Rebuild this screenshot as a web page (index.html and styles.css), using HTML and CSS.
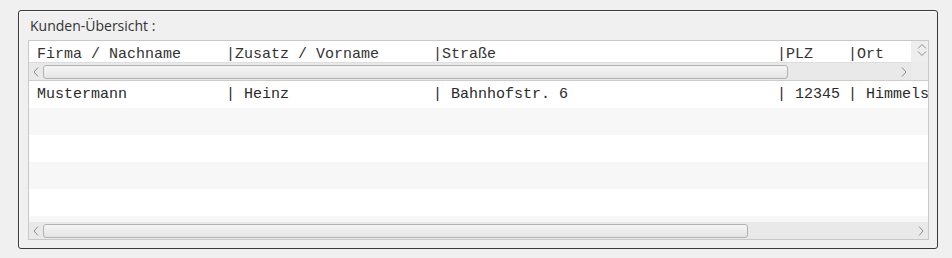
FILE: index.html
```html
<!DOCTYPE html>
<html lang="de">
<head>
  <meta charset="UTF-8" />
  <title>Kunden-Übersicht</title>
  <link rel="stylesheet" href="styles.css">
</head>
<body>
  <div class="groupbox">
    <div class="group-title">Kunden-Übersicht :</div>

    <div class="listview">
      <div class="header-area">
        <div class="header-line">
          <span>Firma / Nachname</span>
          <span>|Zusatz / Vorname</span>
          <span>|Straße</span>
          <span>|PLZ</span>
          <span>|Ort</span>
        </div>
        <div class="vscroll">
          <svg width="10" height="6" viewBox="0 0 10 6"><polyline points="1,5.5 5,1.5 9,5.5" /></svg>
          <svg width="10" height="6" viewBox="0 0 10 6"><polyline points="1,0.5 5,4.5 9,0.5" /></svg>
        </div>
      </div>

      <div class="hscroll-row">
        <div class="hscroll">
          <div class="arrow"><svg width="6" height="10" viewBox="0 0 6 10"><polyline points="5,0.5 1,5 5,9.5" /></svg></div>
          <div class="track"><div class="thumb header-thumb"></div></div>
          <div class="arrow"><svg width="6" height="10" viewBox="0 0 6 10"><polyline points="1,0.5 5,5 1,9.5" /></svg></div>
        </div>
        <div class="corner"></div>
      </div>

      <div class="rows">
        <div class="row">
          <span>Mustermann</span>
          <span>| Heinz</span>
          <span>| Bahnhofstr. 6</span>
          <span>| 12345</span>
          <span>| Himmels</span>
        </div>
        <div class="row"></div>
        <div class="row"></div>
        <div class="row"></div>
        <div class="row"></div>
        <div class="row"></div>
      </div>

      <div class="hscroll bottom">
        <div class="arrow"><svg width="6" height="10" viewBox="0 0 6 10"><polyline points="5,0.5 1,5 5,9.5" /></svg></div>
        <div class="track"><div class="thumb body-thumb"></div></div>
        <div class="arrow"><svg width="6" height="10" viewBox="0 0 6 10"><polyline points="1,0.5 5,5 1,9.5" /></svg></div>
      </div>
    </div>
  </div>
</body>
</html>
```

FILE: styles.css
```css
* {
  margin: 0;
  padding: 0;
  box-sizing: border-box;
}

body {
  background-color: #f0f0f0;
  padding: 10px 0 0 18px;
  font-family: "Open Sans", Arial, sans-serif;
  color: #222;
}

.groupbox {
  width: 920px;
  height: 239px;
  border: 1px solid #3a3a3a;
  border-radius: 3px;
  box-shadow: inset 1px 1px 0 #fafafa;
  padding: 0 0 0 9px;
}

.group-title {
  height: 29px;
  padding: 6px 0 0 2px;
  font-size: 14px;
  line-height: 18px;
  color: #333;
}

.listview {
  width: 901px;
  height: 200px;
  border: 1px solid #c8c8c8;
  background: #fff;
  font-family: "Liberation Mono", "Courier New", monospace;
  font-size: 15px;
  color: #2a2a2a;
}

/* column header line with its own little scrollbars */
.header-area {
  display: flex;
  height: 21px;
}

.header-line,
.row {
  display: grid;
  grid-template-columns: 189px 207px 344px 71px minmax(0, 1fr);
  padding-left: 8px;
  white-space: pre;
}

.header-line {
  flex: 1;
  height: 21px;
  padding-top: 3px;
  line-height: 21px;
  overflow: hidden;
  color: #333;
}

.header-line span,
.row span {
  overflow: hidden;
}

.vscroll {
  width: 17px;
  background: #eeeeee;
  display: flex;
  flex-direction: column;
  align-items: center;
  padding: 2px 0 0 4px;
  gap: 2px;
}

.vscroll svg,
.arrow svg {
  fill: none;
  stroke: #8c8c8c;
  stroke-width: 1;
}

.hscroll-row {
  display: flex;
  height: 19px;
  border-bottom: 1px solid #cdcdcd;
  background: #e9e9e9;
}

.hscroll {
  flex: 1;
  display: flex;
  height: 18px;
  background: #e9e9e9;
  border-top: 1px solid #dedede;
}

.corner {
  width: 17px;
  background: #ececec;
}

.arrow {
  width: 14px;
  display: flex;
  align-items: center;
  justify-content: center;
}

.track {
  flex: 1;
  display: flex;
  align-items: center;
}

.thumb {
  height: 14px;
  border: 1px solid #b2b2b2;
  border-radius: 3px;
  background: linear-gradient(#f6f6f6, #e4e4e4);
}

.header-thumb {
  width: 745px;
}

.body-thumb {
  width: 705px;
}

.rows {
  height: 141px;
  overflow: hidden;
}

.row {
  height: 27px;
  line-height: 27px;
}

.row:nth-child(even) {
  background: #f7f7f7;
}

.hscroll.bottom {
  height: 17px;
  border-top: none;
}

.hscroll.bottom .thumb {
  height: 14px;
}
```
